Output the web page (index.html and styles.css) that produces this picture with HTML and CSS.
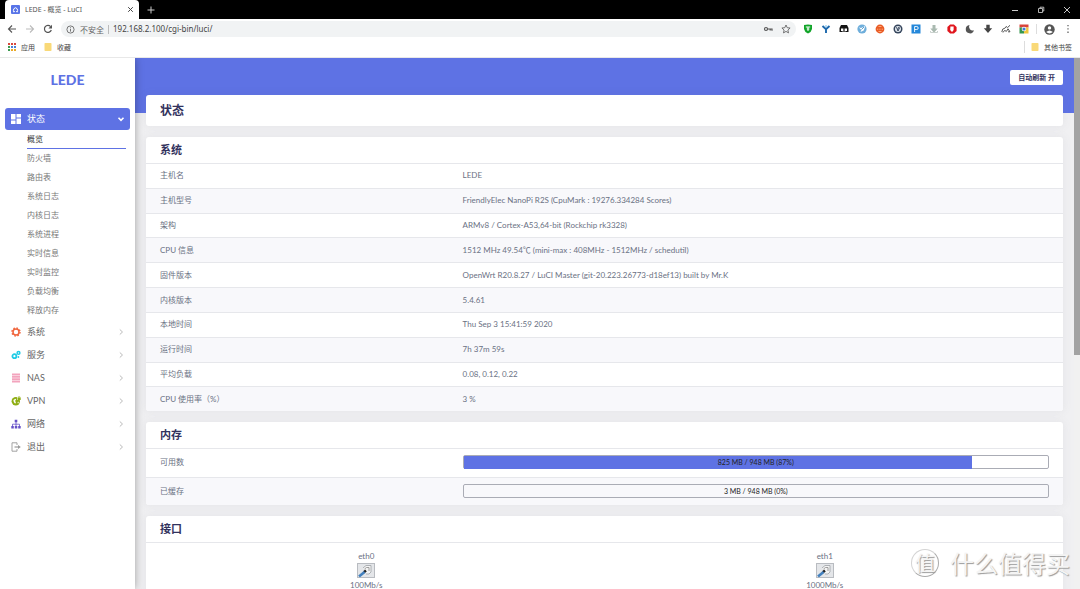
FILE: index.html
```html
<!DOCTYPE html>
<html lang="zh-CN">
<head>
<meta charset="utf-8">
<title>LEDE - 概览 - LuCI</title>
<link rel="stylesheet" href="styles.css">
</head>
<body>
<div class="tabstrip">
  <div class="tab">
    <svg class="favicon" viewBox="0 0 9 9"><rect width="9" height="9" rx="1" fill="#5874e8"/><path d="M2 6.700h1.600A2 2 0 1 1 5.400 6.700H7" fill="none" stroke="#fff" stroke-width="1"/></svg>
    <span class="tab-title">LEDE - 概览 - LuCI</span>
    <button class="icon-btn" aria-label="关闭标签页"><svg width="7" height="7" viewBox="0 0 7 7"><path d="M1.200 1.200l4.600 4.600M5.800 1.200L1.200 5.800" stroke="#444" stroke-width="1"/></svg></button>
  </div>
  <button class="icon-btn new-tab" aria-label="新标签页"><svg width="8" height="8" viewBox="0 0 8 8"><path d="M4 .5v7M.5 4h7" stroke="#ccc"/></svg></button>
  <div class="window-controls">
    <button class="icon-btn" aria-label="最小化"><svg width="8" height="8" viewBox="0 0 8 8"><path d="M1 4.500h6" stroke="#ccc"/></svg></button>
    <button class="icon-btn" aria-label="还原"><svg width="8" height="8" viewBox="0 0 8 8"><path d="M1.500 2.500h4v4h-4zM3 2V1.200h3.800V5H6" fill="none" stroke="#ddd" stroke-width=".8"/></svg></button>
    <button class="icon-btn" aria-label="关闭"><svg width="8" height="8" viewBox="0 0 8 8"><path d="M1 1l6 6M7 1L1 7" stroke="#ddd" stroke-width=".9"/></svg></button>
  </div>
</div>
<div class="toolbar">
  <div class="nav-buttons">
    <button class="icon-btn" aria-label="后退"><svg width="10" height="10" viewBox="0 0 10 10"><path d="M9 5H1.500M5 1.500L1.500 5L5 8.500" fill="none" stroke="#555" stroke-width="1.100"/></svg></button>
    <button class="icon-btn" aria-label="前进"><svg width="10" height="10" viewBox="0 0 10 10"><path d="M1 5h7.500M5 1.500L8.500 5L5 8.500" fill="none" stroke="#bbb" stroke-width="1.100"/></svg></button>
    <button class="icon-btn" aria-label="重新加载"><svg width="10" height="10" viewBox="0 0 10 10"><path d="M8.300 6A3.500 3.500 0 1 1 7.600 2.600" fill="none" stroke="#555" stroke-width="1.200"/><path d="M9 .8v3.600H5.400z" fill="#555"/></svg></button>
  </div>
  <div class="omnibox">
    <svg width="9" height="9" viewBox="0 0 9 9"><circle cx="4.500" cy="4.500" r="3.600" fill="none" stroke="#666" stroke-width=".9"/><path d="M4.500 4v2.600M4.500 2.300v1" stroke="#666" stroke-width=".9"/></svg>
    <label class="insecure" for="url">不安全</label>
    <input class="url" id="url" type="text" value="192.168.2.100/cgi-bin/luci/">
    <svg width="10" height="10" viewBox="0 0 10 10"><circle cx="3" cy="5" r="1.500" fill="none" stroke="#555" stroke-width="1.200"/><path d="M4.700 5H9v1.800M7.200 5v1.500" fill="none" stroke="#555" stroke-width="1.200"/></svg>
    <svg width="10" height="10" viewBox="0 0 10 10"><path d="M5 1l1.200 2.700 2.900.3-2.200 2 .6 2.900L5 7.400 2.500 8.900 3.100 6 .9 4l2.900-.3z" fill="none" stroke="#555" stroke-width=".8"/></svg>
  </div>
  <div class="extensions">
    <svg viewBox="0 0 10 10"><path d="M1 1q4-.8 8 0v4Q8.500 8 5 9.600 1.500 8 1 5z" fill="#12a52a"/><path d="M2.800 3h4.400M5 3v4M3.800 5h2.600" stroke="#fff"/></svg>
    <svg viewBox="0 0 10 10"><path d="M1.500 2l3.500 3.300L8.500 2M5 5v4" fill="none" stroke="#1c68ad" stroke-width="1.900"/><circle cx="5" cy="2" r=".8" fill="#55b5ed"/></svg>
    <svg viewBox="0 0 10 10"><path d="M2 1h6l1.500 3v4h-9V4z" fill="#151515"/><path d="M2 4.500h2.400v2.500H2zM5.600 4.500H8v2.500H5.600z" fill="#fff"/><path d="M3 8h4" stroke="#fff" stroke-width=".6"/></svg>
    <svg viewBox="0 0 10 10"><circle cx="5" cy="5" r="4.600" fill="#6eaedb"/><path d="M1.700 3.300l2.300.8L8.300 2 6.700 6.600 3.500 8l.8-2z" fill="#fff"/><path d="M4.500 5.500L7 3" stroke="#3784bd" stroke-width=".8"/></svg>
    <svg viewBox="0 0 10 10"><circle cx="5" cy="5" r="4.400" fill="#e95b25"/><path d="M2 5.200h1.300m1 0h1.300m1 0H8M3.500 2.500h3M3.500 7.500h3" stroke="#ffb181" stroke-width=".9"/></svg>
    <svg viewBox="0 0 10 10"><circle cx="5" cy="5" r="4.500" fill="#35455c"/><circle cx="5" cy="5" r="3" fill="#e2e8ee"/><path d="M3.500 3.200L5 7l1.700-3.500M5 4.800L6 3" fill="none" stroke="#35455c"/></svg>
    <svg viewBox="0 0 10 10"><rect x=".5" y=".5" width="9" height="9" fill="#2588da"/><path d="M3.600 8V2.500h2.200q1.400 0 1.400 1.500T5.800 5.500H3.600" fill="none" stroke="#fff" stroke-width=".9"/></svg>
    <svg viewBox="0 0 10 10"><path d="M3.500 1h3v3.500h2.200L5 8.800 1.300 4.500h2.200z" fill="#a9b9b0"/><path d="M1.500 7v1.500h7V7" fill="none" stroke="#c3ccc7" stroke-width=".9"/></svg>
    <svg viewBox="0 0 10 10"><path d="M3.100.4h3.800l2.700 2.700v3.800L6.900 9.600H3.100L.4 6.900V3.100z" fill="#e0151d"/><path d="M3.400 2.500h3.200v3.200L5.800 7.500H4.200L3.200 5.700z" fill="#fff"/></svg>
    <svg viewBox="0 0 10 10"><path d="M4.500 1A4.200 4.200 0 1 0 9 6.300 3.700 3.700 0 0 1 4.500 1z" fill="#555"/></svg>
    <svg viewBox="0 0 10 10"><path d="M3.300.8h3.400v3.500h2.500L5 9 .8 4.300h2.500z" fill="#444"/></svg>
    <svg viewBox="0 0 10 10"><path d="M.8 8l1-3 2-.7 1.300-1.800 1.500 1L9 1.300M2 8.500l1.500-2 2 .8 1.500-2.500L9 7.800H7" fill="none" stroke="#555" stroke-width="1"/></svg>
    <svg viewBox="0 0 10 10"><path d="M.5.5h9v3h-9z" fill="#d8433a"/><path d="M.5 3.500H5v6H.5z" fill="#35964f"/><path d="M5 3.500h4.500v6H5z" fill="#efc63f"/><circle cx="5" cy="5" r="2.300" fill="#fff"/><circle cx="5" cy="5" r="1.600" fill="#4079d3"/></svg>
  </div>
  <div class="profile">
    <svg width="11" height="11" viewBox="0 0 11 11"><circle cx="5.500" cy="5.500" r="5.200" fill="#555"/><circle cx="5.500" cy="3.900" r="1.700" fill="#fff"/><path d="M2.200 8Q5.500 4.900 8.800 8 5.500 10.800 2.200 8z" fill="#fff"/></svg>
    <button class="icon-btn" aria-label="菜单"><svg width="4" height="10" viewBox="0 0 4 10"><path d="M1.400 1h1.200v1.300H1.400zM1.400 4.300h1.200v1.300H1.400zM1.400 7.600h1.200v1.300H1.400z" fill="#555"/></svg></button>
  </div>
</div>
<div class="bookmarks">
  <a href="#"><svg width="8" height="8" viewBox="0 0 8 8"><path d="M0 0h2v2H0zM3 0h2v2H3zM6 0h2v2H6z" fill="#d9483e"/><path d="M0 3h2v2H0zM0 6h2v2H0z" fill="#3d9a50"/><path d="M3 3h2v2H3zM6 3h2v2H6z" fill="#4780d8"/><path d="M3 6h2v2H3zM6 6h2v2H6z" fill="#e9a928"/></svg>应用</a>
  <a href="#"><svg width="8" height="8" viewBox="0 0 8 8"><rect x=".5" width="7" height="8" rx=".8" fill="#f9d978"/></svg>收藏</a>
  <a class="other" href="#"><svg width="8" height="8" viewBox="0 0 8 8"><rect x=".5" width="7" height="8" rx=".8" fill="#f9d978"/></svg>其他书签</a>
</div>
<div class="page">
  <nav class="sidebar">
    <a class="brand" href="#">LEDE</a>
    <a class="menu active" href="#"><svg width="10" height="10" viewBox="0 0 10 10"><path d="M0 0h4.500v5.500H0zM5.500 0H10v3.500H5.500zM0 6.500h4.500V10H0zM5.500 4.500H10V10H5.500z" fill="#fff"/></svg><span>状态</span><svg class="arrow" width="8" height="8" viewBox="0 0 8 8"><path d="M1.500 2.800L4 5.300l2.500-2.500" fill="none" stroke="#fff" stroke-width="1.600"/></svg></a>
    <ul class="submenu">
      <li><a class="current" href="#">概览</a></li>
      <li><a href="#">防火墙</a></li>
      <li><a href="#">路由表</a></li>
      <li><a href="#">系统日志</a></li>
      <li><a href="#">内核日志</a></li>
      <li><a href="#">系统进程</a></li>
      <li><a href="#">实时信息</a></li>
      <li><a href="#">实时监控</a></li>
      <li><a href="#">负载均衡</a></li>
      <li><a href="#">释放内存</a></li>
    </ul>
    <a class="menu" href="#"><svg width="10" height="10" viewBox="0 0 10 10"><circle cx="5" cy="5" r="3" fill="none" stroke="#f0643c" stroke-width="1.500"/><circle cx="5" cy="5" r="4" fill="none" stroke="#f0643c" stroke-width="1.400" stroke-dasharray="1.570 1.570"/></svg><span>系统</span><svg class="arrow" width="8" height="8" viewBox="0 0 8 8"><path d="M2.800 1.500L5.500 4 2.800 6.500" fill="none" stroke="#bbb"/></svg></a>
    <a class="menu" href="#"><svg width="10" height="10" viewBox="0 0 10 10"><circle cx="3.400" cy="6.200" r="2" fill="none" stroke="#20cbe5" stroke-width="1.800"/><circle cx="7.500" cy="2.900" r="1.400" fill="none" stroke="#20cbe5" stroke-width="1.500"/><circle cx="7.400" cy="7" r=".9" fill="#20cbe5"/></svg><span>服务</span><svg class="arrow" width="8" height="8" viewBox="0 0 8 8"><path d="M2.800 1.500L5.500 4 2.800 6.500" fill="none" stroke="#bbb"/></svg></a>
    <a class="menu" href="#"><svg width="10" height="10" viewBox="0 0 10 10"><path d="M1 .5h8v2H1zM1 3h8v1.800H1zM1 5.300h8v1.800H1zM1 7.600h8v2H1z" fill="#f3a4bd"/></svg><span>NAS</span><svg class="arrow" width="8" height="8" viewBox="0 0 8 8"><path d="M2.800 1.500L5.500 4 2.800 6.500" fill="none" stroke="#bbb"/></svg></a>
    <a class="menu" href="#"><svg width="10" height="10" viewBox="0 0 10 10"><circle cx="4.800" cy="5.300" r="4.200" fill="#8eae14"/><path d="M2.400 4l2-1.200.8 1L3.800 5l1.200 1-.8 1.700L2.800 6zM6.500 6l1.500-.3-1 2z" fill="#fff"/><path d="M6 0h4v4H6z" fill="#fff"/><path d="M6.500 1.800h3.200v2.200H6.500z" fill="#8eae14"/><path d="M7.200 2V.9h1.800V2" fill="none" stroke="#8eae14" stroke-width=".7"/></svg><span>VPN</span><svg class="arrow" width="8" height="8" viewBox="0 0 8 8"><path d="M2.800 1.500L5.500 4 2.800 6.500" fill="none" stroke="#bbb"/></svg></a>
    <a class="menu" href="#"><svg width="10" height="10" viewBox="0 0 10 10"><path d="M3.700.7h2.600v2.600H3.700zM.3 7h2.500v2.500H.3zM3.800 7h2.500v2.500H3.800zM7.200 7h2.500v2.500H7.200z" fill="#6650c8"/><path d="M5 3v4M1.500 7V5.200h7V7" fill="none" stroke="#6650c8" stroke-width=".8"/></svg><span>网络</span><svg class="arrow" width="8" height="8" viewBox="0 0 8 8"><path d="M2.800 1.500L5.500 4 2.800 6.500" fill="none" stroke="#bbb"/></svg></a>
    <a class="menu" href="#"><svg width="10" height="10" viewBox="0 0 10 10"><path d="M6 3V.8H1v8.400h5V7" fill="none" stroke="#999" stroke-width=".9"/><path d="M3.500 5h4" stroke="#999" stroke-width="1.200"/><path d="M7 2.900L9.800 5 7 7.100z" fill="#999"/></svg><span>退出</span><svg class="arrow" width="8" height="8" viewBox="0 0 8 8"><path d="M2.800 1.500L5.500 4 2.800 6.500" fill="none" stroke="#bbb"/></svg></a>
  </nav>
  <main class="main">
    <header class="banner"><button class="refresh">自动刷新 开</button></header>
    <div class="content">
      <section class="card"><h1>状态</h1></section>
      <section class="card">
        <h2>系统</h2>
        <table class="info system">
          <tr><th scope="row">主机名</th><td>LEDE</td></tr>
          <tr><th scope="row">主机型号</th><td>FriendlyElec NanoPi R2S (CpuMark : 19276.334284 Scores)</td></tr>
          <tr><th scope="row">架构</th><td>ARMv8 / Cortex-A53,64-bit (Rockchip rk3328)</td></tr>
          <tr><th scope="row">CPU 信息</th><td>1512 MHz 49.54℃ (mini-max : 408MHz - 1512MHz / schedutil)</td></tr>
          <tr><th scope="row">固件版本</th><td>OpenWrt R20.8.27 / LuCI Master (git-20.223.26773-d18ef13) built by Mr.K</td></tr>
          <tr><th scope="row">内核版本</th><td>5.4.61</td></tr>
          <tr><th scope="row">本地时间</th><td>Thu Sep 3 15:41:59 2020</td></tr>
          <tr><th scope="row">运行时间</th><td>7h 37m 59s</td></tr>
          <tr><th scope="row">平均负载</th><td>0.08, 0.12, 0.22</td></tr>
          <tr><th scope="row">CPU 使用率（%）</th><td>3 %</td></tr>
        </table>
      </section>
      <section class="card">
        <h2>内存</h2>
        <table class="info memory">
          <tr><th scope="row">可用数</th><td><div class="bar"><div class="fill" style="width:87%"></div><span>825 MB / 948 MB (87%)</span></div></td></tr>
          <tr><th scope="row">已缓存</th><td><div class="bar"><div class="fill" style="width:0%"></div><span>3 MB / 948 MB (0%)</span></div></td></tr>
        </table>
      </section>
      <section class="card">
        <h2>接口</h2>
        <div class="ports">
          <div class="port"><span>eth0</span>
            <svg width="18" height="15" viewBox="0 0 18 15"><rect x=".5" y=".5" width="17" height="14" fill="#e4e6e9" stroke="#b9bcc1"/><path d="M6 5l3-2.500h5V9l-2 2H9" fill="#f4f4f4" stroke="#a5a9ad" stroke-width=".9"/><path d="M7.500 6l2-1.500h2.500V8" fill="none" stroke="#888" stroke-width=".8"/><path d="M9 7.500L6.800 9.300" stroke="#222" stroke-width="2.400"/><path d="M7.500 9L2 13.500" stroke="#4380bd" stroke-width="2.600"/></svg>
            <span>100Mb/s</span></div>
          <div class="port"><span>eth1</span>
            <svg width="18" height="15" viewBox="0 0 18 15"><rect x=".5" y=".5" width="17" height="14" fill="#e4e6e9" stroke="#b9bcc1"/><path d="M6 5l3-2.500h5V9l-2 2H9" fill="#f4f4f4" stroke="#a5a9ad" stroke-width=".9"/><path d="M7.500 6l2-1.500h2.500V8" fill="none" stroke="#888" stroke-width=".8"/><path d="M9 7.500L6.800 9.300" stroke="#222" stroke-width="2.400"/><path d="M7.500 9L2 13.500" stroke="#4380bd" stroke-width="2.600"/></svg>
            <span>1000Mb/s</span></div>
        </div>
      </section>
    </div>
  </main>
  <div class="scrollbar"><div class="thumb"></div></div>
</div>
<div class="watermark"><span class="seal">值</span><span>什么值得买</span></div>
</body>
</html>
```
FILE: styles.css
```css
* { box-sizing: border-box; }
body {
  margin: 0;
  height: 100vh;
  display: flex;
  flex-direction: column;
  overflow: hidden;
  font: 8px/12px Lato, "Noto Sans CJK SC", sans-serif;
  color: #6a7183;
  background: #fff;
}
a { color: inherit; text-decoration: none; }
svg { display: block; flex: none; }
button { font: inherit; }
.icon-btn { display: flex; padding: 0; border: 0; background: none; }

/* Browser frame */
.tabstrip {
  flex: none;
  height: 19px;
  display: flex;
  align-items: center;
  gap: 8px;
  padding-left: 5px;
  background: #000;
  font-family: "Noto Sans", "Noto Sans CJK SC", sans-serif;
}
.tab {
  align-self: stretch;
  width: 134px;
  display: flex;
  align-items: center;
  gap: 5px;
  padding: 0 5px 0 6px;
  border-radius: 4px 4px 0 0;
  background: #fff;
  color: #555;
  font-size: 7px;
}
.favicon { width: 9px; height: 9px; }
.tab-title { flex: 1; }
.window-controls { display: flex; gap: 18px; margin-left: auto; padding-right: 9px; }
.toolbar {
  flex: none;
  height: 20px;
  display: flex;
  align-items: center;
  padding: 0 10px 0 7px;
  font-family: "Noto Sans", "Noto Sans CJK SC", sans-serif;
}
.nav-buttons { display: flex; gap: 8px; }
.omnibox {
  flex: 1;
  height: 16px;
  display: flex;
  align-items: center;
  gap: 8px;
  margin-left: 8px;
  padding: 0 5px 0 5px;
  border-radius: 8px;
  background: #f1f3f4;
}
.insecure { margin-left: -3px; padding-right: 4px; border-right: 1px solid #bbb; line-height: 9px; color: #666; }
.url {
  flex: 1;
  min-width: 0;
  margin-left: -4px;
  padding: 0;
  border: 0;
  outline: 0;
  background: none;
  font: inherit;
  color: #444;
}
.extensions { display: flex; gap: 8px; padding: 0 7px 0 7px; border-right: 1px solid #ddd; }
.extensions svg { width: 10px; height: 10px; }
.profile { display: flex; align-items: center; gap: 11px; padding-left: 7px; }
.bookmarks {
  flex: none;
  height: 19px;
  display: flex;
  align-items: center;
  gap: 9px;
  padding: 0 8px 2px;
  border-bottom: 1px solid #e8e8e8;
  font-size: 7px;
  color: #444;
}
.bookmarks a { display: flex; align-items: center; gap: 5px; }
.bookmarks .other { margin-left: auto; padding-left: 6px; border-left: 1px solid #ddd; }

/* Page */
.page { flex: 1; min-height: 0; display: flex; overflow: hidden; }
.sidebar {
  flex: none;
  width: 135px;
  z-index: 1;
  padding: 0 5px;
  background: #fff;
  box-shadow: 0 0 8px rgba(0, 0, 0, .35);
}
.brand {
  display: block;
  padding: 12px 0 18px;
  text-align: center;
  font-size: 14px;
  line-height: 20px;
  font-weight: 900;
  color: #5e72e4;
}
.menu {
  height: 23px;
  display: flex;
  align-items: center;
  gap: 6px;
  padding: 0 5px 0 6px;
  border-radius: 3px;
  font-size: 9px;
  color: #666;
}
.menu .arrow { margin-left: auto; }
.menu.active { height: 22px; background: #5e72e4; color: #fff; }
.submenu { margin: 0 4px 0 22px; padding: 0; list-style: none; }
.submenu a { display: block; height: 19px; line-height: 18px; color: #777; }
.submenu .current { border-bottom: 1px solid #5e72e4; color: #333; }
.main { flex: 1; min-width: 0; background: #f0f0f2; }
.banner {
  height: 55px;
  display: flex;
  justify-content: flex-end;
  align-items: flex-start;
  padding: 12px 11px;
  background: #5e72e4;
}
.refresh {
  padding: 0 8px;
  border: 0;
  border-radius: 2px;
  background: #fff;
  line-height: 15px;
  font-size: 7px;
  font-weight: 700;
  color: #32325d;
}
.content { display: flex; flex-direction: column; gap: 11px; margin-top: -18px; padding: 0 11px; }
.card { border-radius: 3px; background: #fff; box-shadow: 0 0 10px rgba(120, 120, 140, .1); overflow: hidden; }
h1, h2 { margin: 0; padding: 0 14px; color: #32325d; font-weight: 700; }
h1 { font-size: 12px; line-height: 31px; }
h2 { font-size: 11px; line-height: 26px; }
.info { width: 100%; border-collapse: collapse; table-layout: fixed; }
.info.system { height: 248px; }
.info.memory { height: 57px; }
.info th, .info td { padding: 0 14px 1px; border-top: 1px solid #e6e7eb; text-align: left; font-weight: 400; }
.info th { width: 33%; }
.info tr:nth-child(even) { background: #f8f8fb; }
.bar {
  height: 14px;
  display: grid;
  border: 1px solid #aaacb5;
  border-radius: 2px;
  font-size: 7px;
  line-height: 13px;
  text-align: center;
  color: #222;
}
.bar > * { grid-area: 1 / 1; }
.fill { background: #5e72e4; }
.ports { display: grid; grid-template-columns: 1fr 1fr; border-top: 1px solid #e6e7eb; padding: 7px 0; }
.port { display: flex; flex-direction: column; align-items: center; gap: 1px; padding-right: 18px; }
.scrollbar { flex: none; width: 6px; background: #f1f1f1; }
.thumb { height: 56%; background: #a3a3a3; }
.watermark {
  position: absolute;
  z-index: 2;
  right: 10px;
  bottom: 12px;
  display: flex;
  align-items: center;
  gap: 11px;
  font: 24px/28px "Noto Sans CJK SC", sans-serif;
  color: #f4f4f4;
  text-shadow: 1px 1px 1px #999;
}
.seal {
  width: 28px;
  height: 28px;
  border: 1px solid #d4d4d4;
  border-right-color: #aaa;
  border-bottom-color: #aaa;
  border-radius: 50%;
  text-align: center;
  font-size: 20px;
  line-height: 25px;
}
```
